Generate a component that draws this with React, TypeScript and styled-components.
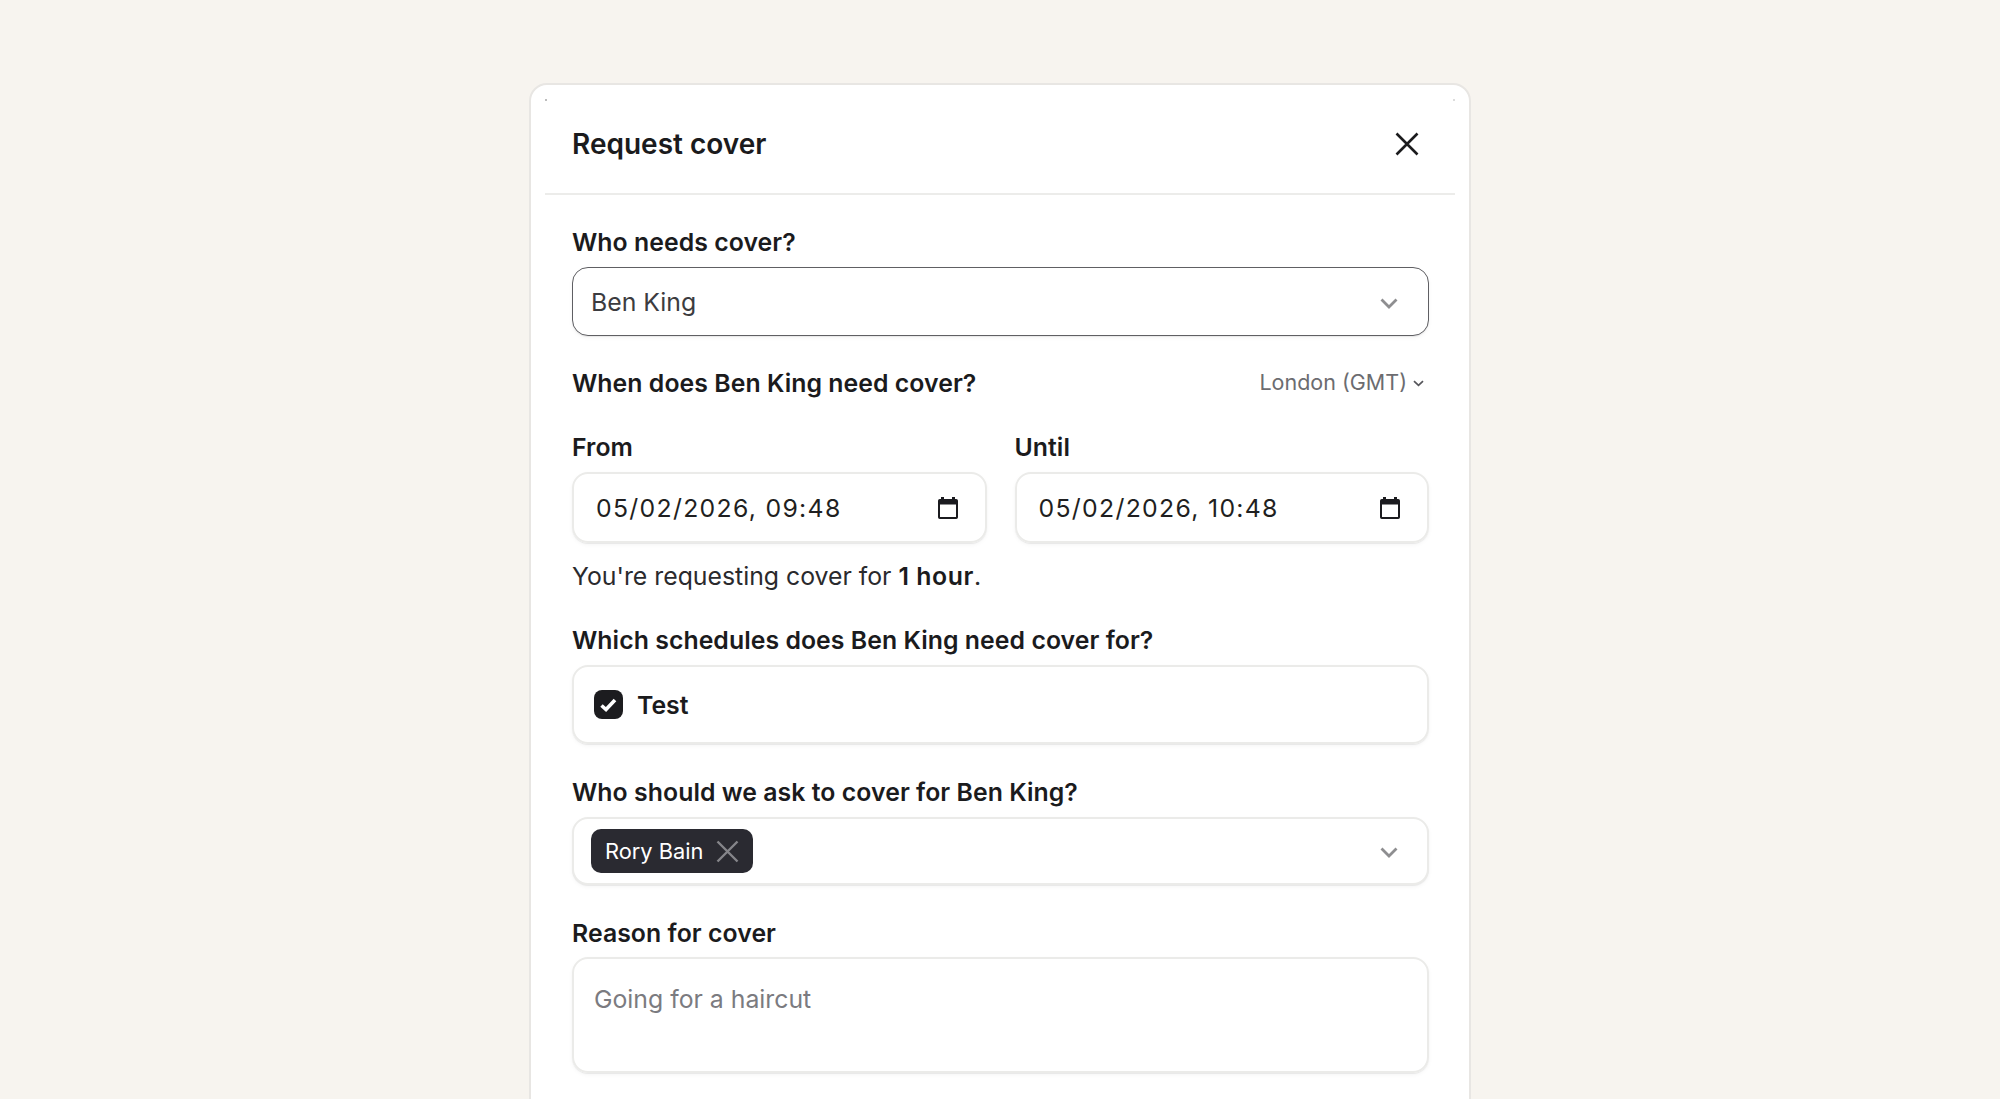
import React from "react";
import styled, { createGlobalStyle } from "styled-components";

const Global = createGlobalStyle`
  html, body { margin: 0; height: 100%; overflow: hidden; background: #f7f4ef; }
  * { box-sizing: border-box; }
  body { font-family: Inter, "Liberation Sans", sans-serif; color: #1b1b1d; -webkit-font-smoothing: antialiased; }
`;

const fieldShadow = "0 1px 1px rgba(30, 30, 30, 0.07), 0 2px 4px rgba(30, 30, 30, 0.04)";

const Page = styled.div`
  display: flex;
  justify-content: center;
  padding-top: 83px;
  height: 1099px;
  overflow: hidden;
`;

const Card = styled.main`
  position: relative;
  width: 942px;
  height: 1200px;
  flex: none;
  background: #fff;
  border: 2px solid #e8e6e3;
  border-radius: 18px;
  padding: 0 14px;
`;

const Speck = styled.span<{ $side: "left" | "right" }>`
  position: absolute;
  top: 14px;
  ${(p) => (p.$side === "left" ? "left: 14px;" : "right: 14px;")}
  width: 2px;
  height: 2px;
  background: ${(p) => (p.$side === "left" ? "#bdbdbd" : "#dcdcdc")};
`;

const Header = styled.header`
  display: flex;
  justify-content: space-between;
  align-items: flex-start;
  height: 110px;
  padding: 42px 31px 0 27px;
  border-bottom: 2px solid #ececea;
`;

const Title = styled.h1`
  margin: 0;
  font-size: 28px;
  line-height: 34px;
  font-weight: 600;
`;

const CloseButton = styled.button`
  display: flex;
  padding: 0;
  border: 0;
  background: none;
  color: #1b1b1d;
`;

const Form = styled.form`
  display: flex;
  flex-direction: column;
  gap: 32px;
  padding: 31px 26px 0 27px;
`;

const Field = styled.div`
  display: flex;
  flex-direction: column;
`;

const Label = styled.label`
  display: block;
  margin-bottom: 9px;
  font-size: 24.8px;
  line-height: 32px;
  font-weight: 600;
  letter-spacing: 0.06px;
`;

const SelectBox = styled.div<{ $focused?: boolean }>`
  display: flex;
  align-items: center;
  justify-content: space-between;
  height: ${(p) => (p.$focused ? 69 : 68)}px;
  padding: 0 ${(p) => (p.$focused ? 30 : 29)}px 0 ${(p) => (p.$focused ? 18 : 17)}px;
  border: ${(p) => (p.$focused ? "1.5px solid #5f5f63" : "2px solid #ebebe9")};
  border-radius: 16px;
  background: #fff;
  box-shadow: ${fieldShadow};
  font-size: 24.8px;
  color: #3c3c40;
`;

const Chevron = styled.svg`
  width: 18px;
  height: 11px;
  margin-top: 3px;
  fill: none;
  stroke: #8e8e90;
  stroke-width: 2.8;
  flex: none;
`;

const WhenSection = styled.div`
  display: flex;
  flex-direction: column;
  gap: 32px;
  margin-top: -1px;
`;

const WhenRow = styled.div`
  display: flex;
  align-items: center;
  justify-content: space-between;
  height: 32px;
  padding-right: 5px;
`;

const WhenTitle = styled.span`
  font-size: 24.8px;
  line-height: 32px;
  font-weight: 600;
  letter-spacing: 0.06px;
`;

const Zone = styled.span`
  display: inline-flex;
  align-items: center;
  gap: 6px;
  margin-top: -2px;
  font-size: 21.5px;
  color: #6c6c70;
`;

const ZoneChevron = styled.svg`
  width: 11px;
  height: 7px;
  margin-top: 3px;
  fill: none;
  stroke: #55555a;
  stroke-width: 1.7;
`;

const DateGrid = styled.div`
  display: grid;
  grid-template-columns: 414.5px 414.5px;
  justify-content: space-between;
`;

const DateBox = styled.div`
  display: flex;
  align-items: center;
  justify-content: space-between;
  height: 71px;
  padding: 0 27px 0 22px;
  border: 2px solid #ebebe9;
  border-radius: 16px;
  box-shadow: ${fieldShadow};
  font-size: 24.8px;
  letter-spacing: 1.3px;
  color: #1f1f21;
`;

const CalendarIcon = styled.svg`
  width: 20px;
  height: 22px;
  flex: none;
`;

const Helper = styled.p`
  margin: 17px 0 0;
  font-size: 24.8px;
  line-height: 32px;
  color: #2a2a2d;

  strong {
    font-weight: 600;
    letter-spacing: 0.6px;
    color: #1b1b1d;
  }
`;

const CheckboxBox = styled.div`
  display: flex;
  align-items: center;
  gap: 14px;
  height: 79px;
  padding: 0 20px;
  border: 2px solid #ebebe9;
  border-radius: 16px;
  box-shadow: ${fieldShadow};
`;

const CheckMark = styled.span`
  display: flex;
  align-items: center;
  justify-content: center;
  width: 29px;
  height: 29px;
  background: #1c1c1f;
  border-radius: 8px;
`;

const CheckLabel = styled.span`
  font-size: 24.8px;
  font-weight: 600;
`;

const Chip = styled.span`
  display: inline-flex;
  align-items: center;
  gap: 13px;
  height: 44px;
  padding: 0 14px;
  background: #2a2a31;
  border-radius: 10px;
  color: #fff;
  font-size: 21.8px;
`;

const TextArea = styled.div`
  height: 116px;
  padding: 24px 20px;
  margin-top: -1px;
  border: 2px solid #ebebe9;
  border-radius: 16px;
  box-shadow: ${fieldShadow};
  font-size: 24.8px;
  line-height: 32px;
  color: #7b7b80;
`;

const DownChevron = () => (
  <Chevron viewBox="0 0 18 11"><path d="M1.5 1.5 9 9l7.5-7.5" /></Chevron>
);

const Calendar = () => (
  <CalendarIcon viewBox="0 0 20 22">
    <path fill="#1b1b1f" d="M3 0h3v2h8V0h3v2h1.2A1.8 1.8 0 0 1 20 3.8v16.4a1.8 1.8 0 0 1-1.8 1.8H1.8A1.8 1.8 0 0 1 0 20.2V3.8A1.8 1.8 0 0 1 1.8 2H3zM2 7.5V20h16V7.5z" />
  </CalendarIcon>
);

export default function App() {
  return (
    <>
      <Global />
      <Page>
        <Card>
          <Speck $side="left" />
          <Speck $side="right" />
          <Header>
            <Title>Request cover</Title>
            <CloseButton type="button" aria-label="Close">
              <svg width="34" height="34" viewBox="0 0 34 34" fill="none" stroke="currentColor" strokeWidth="2.6">
                <path d="M6.5 6.5l21 21M27.5 6.5l-21 21" />
              </svg>
            </CloseButton>
          </Header>
          <Form>
            <Field>
              <Label>Who needs cover?</Label>
              <SelectBox $focused>
                Ben King
                <DownChevron />
              </SelectBox>
            </Field>
            <WhenSection>
              <WhenRow>
                <WhenTitle>When does Ben King need cover?</WhenTitle>
                <Zone>
                  London (GMT)
                  <ZoneChevron viewBox="0 0 11 7"><path d="M1 1.2 5.5 5.4l4.5-4.2" /></ZoneChevron>
                </Zone>
              </WhenRow>
              <Field>
                <DateGrid>
                  <Field>
                    <Label>From</Label>
                    <DateBox>05/02/2026, 09:48<Calendar /></DateBox>
                  </Field>
                  <Field>
                    <Label>Until</Label>
                    <DateBox>05/02/2026, 10:48<Calendar /></DateBox>
                  </Field>
                </DateGrid>
                <Helper>You're requesting cover for <strong>1 hour</strong>.</Helper>
              </Field>
            </WhenSection>
            <Field>
              <Label>Which schedules does Ben King need cover for?</Label>
              <CheckboxBox>
                <CheckMark>
                  <svg width="17" height="14" viewBox="0 0 17 14" fill="none" stroke="#fff" strokeWidth="3.6">
                    <path d="M1.5 7.5 6 11.5 15 2" />
                  </svg>
                </CheckMark>
                <CheckLabel>Test</CheckLabel>
              </CheckboxBox>
            </Field>
            <Field>
              <Label>Who should we ask to cover for Ben King?</Label>
              <SelectBox>
                <Chip>
                  Rory Bain
                  <svg width="23" height="23" viewBox="0 0 23 23" fill="none" stroke="#85858a" strokeWidth="2.4">
                    <path d="M1.5 1.5l20 20M21.5 1.5l-20 20" />
                  </svg>
                </Chip>
                <DownChevron />
              </SelectBox>
            </Field>
            <Field>
              <Label>Reason for cover</Label>
              <TextArea>Going for a haircut</TextArea>
            </Field>
          </Form>
        </Card>
      </Page>
    </>
  );
}
